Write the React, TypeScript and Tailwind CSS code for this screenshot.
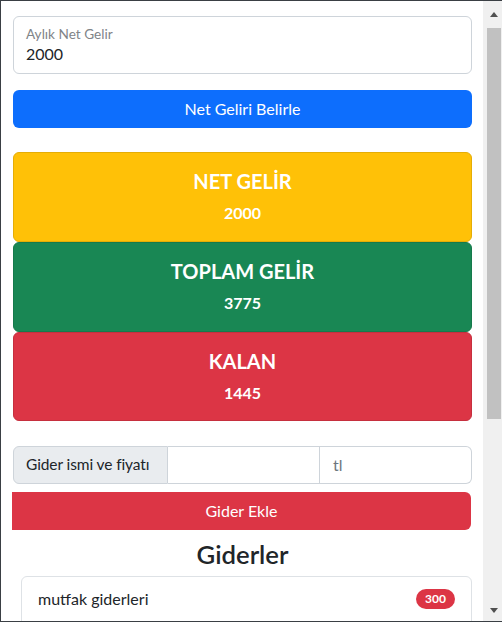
const cards = [
  { title: "NET GELİR", value: "2000", cls: "bg-[#ffc107] border-[#e5ad06]", h: "h-[90px]" },
  { title: "TOPLAM GELİR", value: "3775", cls: "bg-[#198754] border-[#167a4c]", h: "h-[90px]" },
  { title: "KALAN", value: "1445", cls: "bg-[#dc3545] border-[#c62f3e]", h: "h-[89px]" },
];

export default function App() {
  return (
    <div
      className="w-[502px] h-[622px] flex border-t border-l border-b border-[#3a3f44] bg-white overflow-hidden text-[#212529]"
      style={{ fontFamily: "Lato, 'Open Sans', sans-serif" }}
    >
      <div className="flex-1 pl-3 pr-[11px] overflow-hidden">
        {/* floating input */}
        <div className="mt-[15px] h-[58px] border border-[#ced4da] rounded-md px-3 pt-[7px]">
          <div className="text-[13.6px] leading-[20px] text-[#808488]">Aylık Net Gelir</div>
          <div className="text-base leading-[20px]">2000</div>
        </div>

        <button className="mt-4 w-full h-[38px] rounded-md bg-[#0d6efd] text-white text-base">
          Net Geliri Belirle
        </button>

        <div className="mt-6 flex flex-col">
          {cards.map((c) => (
            <div
              key={c.title}
              className={`${c.cls} ${c.h} border rounded-md flex flex-col items-center pt-[16px] text-white font-bold`}
            >
              <div className="text-[20px] leading-[24px]">{c.title}</div>
              <div className="mt-[8px] text-base leading-[24px]">{c.value}</div>
            </div>
          ))}
        </div>

        <div className="mt-[25px] flex h-[38px]">
          <div className="w-[155px] shrink-0 whitespace-nowrap bg-[#e9ecef] border border-[#ced4da] rounded-l-md pl-3 flex items-center text-[15.5px] tracking-[-0.1px]">
            Gider ismi ve fiyatı
          </div>
          <div className="flex-1 border-y border-r border-[#ced4da]" />
          <div className="w-[152px] shrink-0 border-y border-r border-[#ced4da] rounded-r-md px-[13px] flex items-center text-base text-[#6c757d]">
            tl
          </div>
        </div>

        <button className="mt-2 -ml-px w-full h-[38px] rounded-r-md bg-[#dc3545] text-white text-base">
          Gider Ekle
        </button>

        <h2 className="mt-[9px] text-center text-[25.7px] leading-[31px] font-semibold">Giderler</h2>

        <div className="mt-[6px] ml-2 border border-[#dee2e6] rounded-t-md h-[50px] px-4 flex items-start justify-between pt-[10px]">
          <span className="text-base">mutfak giderleri</span>
          <span className="mt-[2px] bg-[#dc3545] text-white text-[12px] font-bold rounded-full px-[9px] h-[20px] flex items-center">
            300
          </span>
        </div>
      </div>

      {/* scrollbar */}
      <div className="w-[19px] bg-[#f0f0f0] flex flex-col items-center pl-[2px]">
        <div className="h-[27px] flex items-center justify-center">
          <svg width="8" height="5" viewBox="0 0 8 5"><path d="M0 5L4 0L8 5Z" fill="#505050" /></svg>
        </div>
        <div className="w-[14px] h-[391px] bg-[#c1c1c1]" />
        <div className="flex-1" />
        <div className="h-[22px] flex items-center justify-center">
          <svg width="8" height="5" viewBox="0 0 8 5"><path d="M0 0L4 5L8 0Z" fill="#505050" /></svg>
        </div>
      </div>
    </div>
  );
}
